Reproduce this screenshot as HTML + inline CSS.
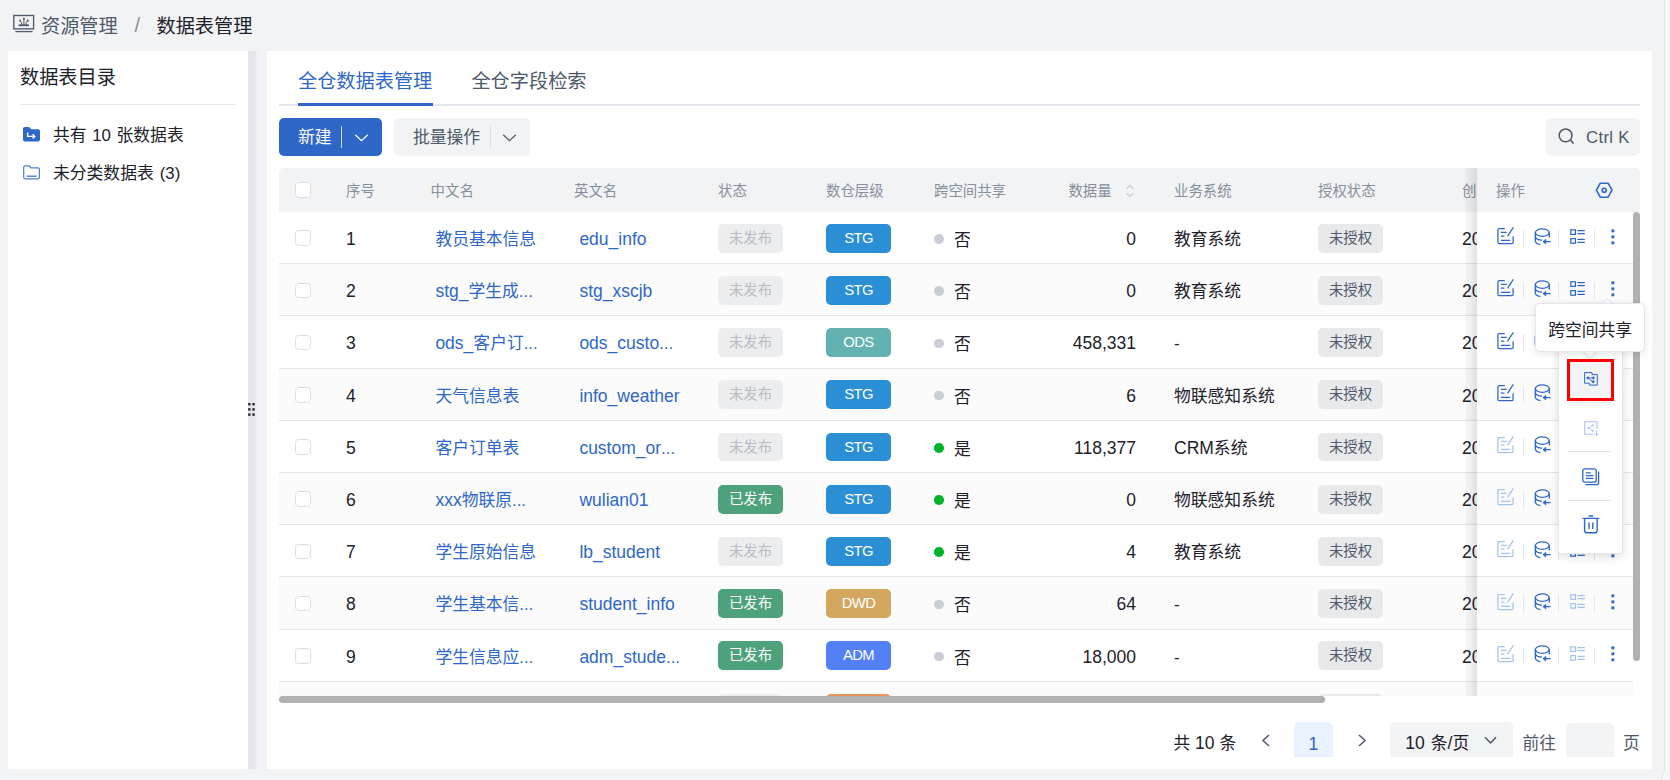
<!DOCTYPE html>
<html lang="zh-CN">
<head>
<meta charset="utf-8">
<title>数据表管理</title>
<style>
*{box-sizing:border-box;margin:0;padding:0}
html,body{width:1670px;height:780px;overflow:hidden}
body{background:#f7f7f7;font-family:"Liberation Sans","Noto Sans CJK SC",sans-serif;color:#1d2129;position:relative;font-size:16.8px}
i{font-style:normal;display:block;position:absolute}
.app{position:absolute;left:0;top:0;width:1665px;height:786px;background:#f2f3f5;border-right:1px solid #e4e4e6;border-bottom-right-radius:18px;overflow:hidden}
.abs{position:absolute}
.t{position:absolute;white-space:nowrap;line-height:1}
.panel{position:absolute;background:#fff}
.ic{position:absolute;display:block;overflow:visible}
/* table */
.tbl{position:absolute;left:279px;top:168px;width:1361px;height:528px;overflow:hidden}
.thead{position:absolute;left:0;top:0;width:1361px;height:44px;background:#f2f3f5;border-radius:5px 5px 0 0}
.th{position:absolute;top:0;height:44px;line-height:46px;font-size:14.4px;color:#86909c;white-space:nowrap}
.tbody{position:absolute;left:0;top:44px;width:1361px;height:484px;overflow:hidden}
.row{position:absolute;left:0;width:100%;height:52.2px;border-bottom:1.2px solid #e5e6eb;background:#fff}
.row.stripe{background:#fbfbfc}
.c{position:absolute;top:0;height:51px;line-height:56px;font-size:16.8px;white-space:nowrap;color:#1d2129}
.c.lk{color:#2e67c8}
.la{font-weight:normal;font-size:17.5px;line-height:1}
.c.num{text-align:right}
.cb{width:15.6px;height:15.6px;border:1.5px solid #dcdee6;border-radius:3.6px;background:#fff}
.tag{position:absolute;top:11.8px;height:28.8px;width:65px;line-height:29.6px;border-radius:5px;font-size:14.4px;text-align:center;white-space:nowrap}
.tag.ly{letter-spacing:-.6px;font-size:14.8px}
.tag.unpub{background:#ecedef;color:#b9bcc3}
.tag.pub{background:#4da17b;color:#fff}
.tag.unauth{background:#e8e9eb;color:#4e5969}
.dot{width:9.6px;height:9.6px;border-radius:50%;top:22.3px}
.vd{width:1.2px;height:17px;background:#e5e6eb}
.fixed{position:absolute;left:1198px;top:0;width:163px;height:528px;background:#fff;}
.shadow{position:absolute;left:1186px;top:0;width:12px;height:528px;background:linear-gradient(90deg,rgba(0,0,0,.02),rgba(0,0,0,.11))}
</style>
</head>
<body>
<div class="app">

<!-- breadcrumb -->
<svg class="ic" style="left:12px;top:13px" width="24" height="21" viewBox="0 0 24 21" fill="none" stroke="#4e5969" stroke-width="1.5"><rect x="1.8" y="2.5" width="19.8" height="13.4" stroke-width="1.35"/><path d="M3.4 18.6H20.6" stroke-width="1.3"/><path d="M6.6 12.3H17" stroke-width="1.8"/><path d="M9.6 12V9.5L8.2 7.9M11.9 12V6.4M14.2 12V9.5L15.6 7.9" stroke-width="1"/><circle cx="8" cy="7.5" r="1" fill="#4e5969" stroke="none"/><circle cx="11.9" cy="5.8" r="1.1" fill="#4e5969" stroke="none"/><circle cx="15.8" cy="7.5" r="1" fill="#4e5969" stroke="none"/></svg>
<span class="t" style="left:41px;top:17px;font-size:19.2px;color:#4e5969">资源管理</span>
<span class="t" style="left:134.6px;top:15.4px;font-size:20px;color:#86909c">/</span>
<span class="t" style="left:156.5px;top:17px;font-size:19.2px;color:#1d2129">数据表管理</span>

<!-- left panel -->
<div class="panel" style="left:8px;top:51px;width:240px;height:718px"></div>
<div class="abs" style="left:248px;top:51px;width:19px;height:718px;background:linear-gradient(90deg,#e5e6eb 0,#e5e6eb 6.6px,#eff0f3 9px,#f2f3f5 13px)"></div>
<svg class="ic" style="left:248px;top:403px" width="8" height="14" viewBox="0 0 8 14" fill="#1d2129"><rect x="0.2" y="0" width="2.3" height="2.4"/><rect x="4.4" y="0" width="2.3" height="2.4"/><rect x="0.2" y="5.2" width="2.3" height="2.4"/><rect x="4.4" y="5.2" width="2.3" height="2.4"/><rect x="0.2" y="10.4" width="2.3" height="2.4"/><rect x="4.4" y="10.4" width="2.3" height="2.4"/></svg>
<span class="t" style="left:20px;top:68px;font-size:19.2px">数据表目录</span>
<div class="abs" style="left:20px;top:103.6px;width:216px;height:1.2px;background:#e5e6eb"></div>
<svg class="ic" style="left:23px;top:127px" width="17" height="15" viewBox="0 0 17 15"><path d="M0 1.8C0 .8.8 0 1.8 0H6.2L8.2 2.2H15.2C16.2 2.2 17 3 17 4V12.6C17 13.6 16.2 14.4 15.2 14.4H1.8C.8 14.4 0 13.6 0 12.6Z" fill="#2e67c8"/><path d="M4.6 5.4V9.4H11.6M9.6 7.2L11.8 9.4L9.6 11.6" fill="none" stroke="#fff" stroke-width="1.4"/></svg>
<span class="t" style="left:53px;top:127.8px;font-size:16.8px;word-spacing:1px">共有 10 张数据表</span>
<svg class="ic" style="left:23px;top:165px" width="17" height="15" viewBox="0 0 17 15" fill="none" stroke="#4a7fd6" stroke-width="1.2"><path d="M.7 2.4C.7 1.5 1.4.8 2.3.8H6.2L8 2.9H14.8C15.7 2.9 16.4 3.6 16.4 4.5V12.2C16.4 13.1 15.7 13.8 14.8 13.8H2.3C1.4 13.8.7 13.1.7 12.2Z"/><path d="M3.6 11.2H13.6" stroke-width="1.4"/></svg>
<span class="t" style="left:53px;top:165.8px;font-size:16.8px;word-spacing:1.4px">未分类数据表 (3)</span>

<!-- main panel -->
<div class="panel" style="left:267px;top:51px;width:1385px;height:718px"></div>
<span class="t" style="left:298px;top:71.5px;font-size:19.2px;color:#2e67c8">全仓数据表管理</span>
<span class="t" style="left:471.4px;top:71.5px;font-size:19.2px;color:#4e5969">全仓字段检索</span>
<div class="abs" style="left:279px;top:104px;width:1361px;height:1.6px;background:#e5e6eb"></div>
<div class="abs" style="left:298px;top:103px;width:135px;height:3px;background:#2e67c8"></div>

<!-- buttons -->
<div class="abs" style="left:279px;top:118px;width:103px;height:38px;border-radius:5px;background:#2e67c8"></div>
<span class="t" style="left:298px;top:129.8px;font-size:16.8px;color:#fff">新建</span>
<div class="abs" style="left:341px;top:126px;width:1.2px;height:22px;background:rgba(255,255,255,.75)"></div>
<svg class="ic" style="left:354px;top:133px" width="15" height="10" viewBox="0 0 15 10" fill="none" stroke="#fff" stroke-width="1.2"><path d="M1.2 1.8L7.5 7.6L13.8 1.8"/></svg>
<div class="abs" style="left:394px;top:118px;width:136px;height:38px;border-radius:5px;background:#f2f3f5"></div>
<span class="t" style="left:413px;top:129.8px;font-size:16.8px;color:#4e5969">批量操作</span>
<div class="abs" style="left:490px;top:126px;width:1.2px;height:22px;background:#dcdde2"></div>
<svg class="ic" style="left:502px;top:133px" width="15" height="10" viewBox="0 0 15 10" fill="none" stroke="#4e5969" stroke-width="1.2"><path d="M1.2 1.8L7.5 7.6L13.8 1.8"/></svg>

<!-- search -->
<div class="abs" style="left:1546px;top:118px;width:94px;height:38px;border-radius:5px;background:#f2f3f5"></div>
<svg class="ic" style="left:1558px;top:128px" width="17" height="17" viewBox="0 0 17 17" fill="none" stroke="#4e5969" stroke-width="1.5"><circle cx="7.6" cy="7.4" r="6.4"/><path d="M12.2 12L15.6 15.4"/></svg>
<span class="t" style="left:1586px;top:129.6px;font-size:16.8px;color:#4e5969;letter-spacing:.3px">Ctrl K</span>

<!-- table -->
<div class="tbl">
 <div class="tbody">
<div class="row" style="top:0.0px"><i class="cb" style="left:16.2px;top:18.4px"></i><span class="c" style="left:67px"><b class="la">1</b></span><span class="c lk" style="left:156.4px">教员基本信息</span><span class="c lk" style="left:300.4px"><b class="la">edu_info</b></span><span class="tag unpub" style="left:439px">未发布</span><span class="tag ly" style="left:547px;background:#2b8fd6;color:#fff">STG</span><i class="dot" style="left:655px;background:#c9cdd4"></i><span class="c" style="left:675px;line-height:58px">否</span><span class="c num" style="left:757px;width:100px"><b class="la">0</b></span><span class="c" style="left:895px">教育系统</span><span class="tag unauth" style="left:1039px">未授权</span><span class="c" style="left:1183px"><b class="la">2024-03-12</b></span></div>
<div class="row stripe" style="top:52.2px"><i class="cb" style="left:16.2px;top:18.4px"></i><span class="c" style="left:67px"><b class="la">2</b></span><span class="c lk" style="left:156.4px"><b class="la">stg_</b>学生成...</span><span class="c lk" style="left:300.4px"><b class="la">stg_xscjb</b></span><span class="tag unpub" style="left:439px">未发布</span><span class="tag ly" style="left:547px;background:#2b8fd6;color:#fff">STG</span><i class="dot" style="left:655px;background:#c9cdd4"></i><span class="c" style="left:675px;line-height:58px">否</span><span class="c num" style="left:757px;width:100px"><b class="la">0</b></span><span class="c" style="left:895px">教育系统</span><span class="tag unauth" style="left:1039px">未授权</span><span class="c" style="left:1183px"><b class="la">2024-03-12</b></span></div>
<div class="row" style="top:104.4px"><i class="cb" style="left:16.2px;top:18.4px"></i><span class="c" style="left:67px"><b class="la">3</b></span><span class="c lk" style="left:156.4px"><b class="la">ods_</b>客户订...</span><span class="c lk" style="left:300.4px"><b class="la">ods_custo</b>...</span><span class="tag unpub" style="left:439px">未发布</span><span class="tag ly" style="left:547px;background:#63b2b2;color:#fff">ODS</span><i class="dot" style="left:655px;background:#c9cdd4"></i><span class="c" style="left:675px;line-height:58px">否</span><span class="c num" style="left:757px;width:100px"><b class="la">458,331</b></span><span class="c" style="left:895px">-</span><span class="tag unauth" style="left:1039px">未授权</span><span class="c" style="left:1183px"><b class="la">2024-03-12</b></span></div>
<div class="row stripe" style="top:156.6px"><i class="cb" style="left:16.2px;top:18.4px"></i><span class="c" style="left:67px"><b class="la">4</b></span><span class="c lk" style="left:156.4px">天气信息表</span><span class="c lk" style="left:300.4px"><b class="la">info_weather</b></span><span class="tag unpub" style="left:439px">未发布</span><span class="tag ly" style="left:547px;background:#2b8fd6;color:#fff">STG</span><i class="dot" style="left:655px;background:#c9cdd4"></i><span class="c" style="left:675px;line-height:58px">否</span><span class="c num" style="left:757px;width:100px"><b class="la">6</b></span><span class="c" style="left:895px">物联感知系统</span><span class="tag unauth" style="left:1039px">未授权</span><span class="c" style="left:1183px"><b class="la">2024-03-12</b></span></div>
<div class="row" style="top:208.8px"><i class="cb" style="left:16.2px;top:18.4px"></i><span class="c" style="left:67px"><b class="la">5</b></span><span class="c lk" style="left:156.4px">客户订单表</span><span class="c lk" style="left:300.4px"><b class="la">custom_or</b>...</span><span class="tag unpub" style="left:439px">未发布</span><span class="tag ly" style="left:547px;background:#2b8fd6;color:#fff">STG</span><i class="dot" style="left:655px;background:#00b42a"></i><span class="c" style="left:675px;line-height:58px">是</span><span class="c num" style="left:757px;width:100px"><b class="la">118,377</b></span><span class="c" style="left:895px"><b class="la">CRM</b>系统</span><span class="tag unauth" style="left:1039px">未授权</span><span class="c" style="left:1183px"><b class="la">2024-03-12</b></span></div>
<div class="row stripe" style="top:261.0px"><i class="cb" style="left:16.2px;top:18.4px"></i><span class="c" style="left:67px"><b class="la">6</b></span><span class="c lk" style="left:156.4px"><b class="la">xxx</b>物联原...</span><span class="c lk" style="left:300.4px"><b class="la">wulian01</b></span><span class="tag pub" style="left:439px">已发布</span><span class="tag ly" style="left:547px;background:#2b8fd6;color:#fff">STG</span><i class="dot" style="left:655px;background:#00b42a"></i><span class="c" style="left:675px;line-height:58px">是</span><span class="c num" style="left:757px;width:100px"><b class="la">0</b></span><span class="c" style="left:895px">物联感知系统</span><span class="tag unauth" style="left:1039px">未授权</span><span class="c" style="left:1183px"><b class="la">2024-03-12</b></span></div>
<div class="row" style="top:313.2px"><i class="cb" style="left:16.2px;top:18.4px"></i><span class="c" style="left:67px"><b class="la">7</b></span><span class="c lk" style="left:156.4px">学生原始信息</span><span class="c lk" style="left:300.4px"><b class="la">lb_student</b></span><span class="tag unpub" style="left:439px">未发布</span><span class="tag ly" style="left:547px;background:#2b8fd6;color:#fff">STG</span><i class="dot" style="left:655px;background:#00b42a"></i><span class="c" style="left:675px;line-height:58px">是</span><span class="c num" style="left:757px;width:100px"><b class="la">4</b></span><span class="c" style="left:895px">教育系统</span><span class="tag unauth" style="left:1039px">未授权</span><span class="c" style="left:1183px"><b class="la">2024-03-12</b></span></div>
<div class="row stripe" style="top:365.4px"><i class="cb" style="left:16.2px;top:18.4px"></i><span class="c" style="left:67px"><b class="la">8</b></span><span class="c lk" style="left:156.4px">学生基本信...</span><span class="c lk" style="left:300.4px"><b class="la">student_info</b></span><span class="tag pub" style="left:439px">已发布</span><span class="tag ly" style="left:547px;background:#d4a761;color:#fff">DWD</span><i class="dot" style="left:655px;background:#c9cdd4"></i><span class="c" style="left:675px;line-height:58px">否</span><span class="c num" style="left:757px;width:100px"><b class="la">64</b></span><span class="c" style="left:895px">-</span><span class="tag unauth" style="left:1039px">未授权</span><span class="c" style="left:1183px"><b class="la">2024-03-12</b></span></div>
<div class="row" style="top:417.6px"><i class="cb" style="left:16.2px;top:18.4px"></i><span class="c" style="left:67px"><b class="la">9</b></span><span class="c lk" style="left:156.4px">学生信息应...</span><span class="c lk" style="left:300.4px"><b class="la">adm_stude</b>...</span><span class="tag pub" style="left:439px">已发布</span><span class="tag ly" style="left:547px;background:#5380f7;color:#fff">ADM</span><i class="dot" style="left:655px;background:#c9cdd4"></i><span class="c" style="left:675px;line-height:58px">否</span><span class="c num" style="left:757px;width:100px"><b class="la">18,000</b></span><span class="c" style="left:895px">-</span><span class="tag unauth" style="left:1039px">未授权</span><span class="c" style="left:1183px"><b class="la">2024-03-12</b></span></div>
<div class="row stripe" style="top:469.8px"><i class="cb" style="left:16.2px;top:18.4px"></i><span class="c" style="left:67px"><b class="la">10</b></span><span class="c lk" style="left:156.4px">学生成绩汇...</span><span class="c lk" style="left:300.4px"><b class="la">dws_score</b></span><span class="tag unpub" style="left:439px">未发布</span><span class="tag ly" style="left:547px;background:#ea945b;color:#fff">DWS</span><i class="dot" style="left:655px;background:#c9cdd4"></i><span class="c" style="left:675px;line-height:58px">否</span><span class="c num" style="left:757px;width:100px"><b class="la">120</b></span><span class="c" style="left:895px">-</span><span class="tag unauth" style="left:1039px">未授权</span><span class="c" style="left:1183px"><b class="la">2024-03-12</b></span></div>
 </div>
 <div class="thead">
  <i class="cb" style="left:16.2px;top:14.4px"></i>
  <span class="th" style="left:67px">序号</span>
  <span class="th" style="left:151.6px">中文名</span>
  <span class="th" style="left:295px">英文名</span>
  <span class="th" style="left:439px">状态</span>
  <span class="th" style="left:547px">数仓层级</span>
  <span class="th" style="left:655px">跨空间共享</span>
  <span class="th" style="left:789.4px">数据量</span>
  <svg class="ic" style="left:845.6px;top:16px" width="10" height="14" viewBox="0 0 10 14" fill="none" stroke="#c9cdd4" stroke-width="1.2"><path d="M1.4 5L4.8 1.4L8.2 5M1.4 9L4.8 12.6L8.2 9"/></svg>
  <span class="th" style="left:895px">业务系统</span>
  <span class="th" style="left:1039px">授权状态</span>
  <span class="th" style="left:1183px">创建时间</span>
 </div>
 <div class="shadow"></div>
 <div class="fixed">
  <div class="abs" style="left:0;top:44px;width:156px;height:484px;overflow:hidden">
<div class="row" style="top:0.0px"><svg class="ic" style="left:20px;top:15.2px" width="18" height="18" viewBox="0 0 18 18" fill="none" stroke="#2e67c8" stroke-width="1.25"><path d="M7.8 1.7H2.1Q.9 1.7 .9 2.9V15.4Q.9 16.6 2.1 16.6H14.9Q16.1 16.6 16.1 15.4V9.3"/><path d="M16.3 .3L10.5 9.3"/><path d="M3.9 5.4H9.7M3.9 9.1H7.4M3.9 13.4H13.2"/></svg><i class="vd" style="left:46px;top:17.6px"></i><svg class="ic" style="left:56.5px;top:15.7px" width="19" height="19" viewBox="0 0 19 19" fill="none" stroke="#2e67c8" stroke-width="1.3"><ellipse cx="8.3" cy="4.6" rx="7" ry="3.7"/><path d="M1.3 4.6V12.6C1.3 14.6 3.4 16.2 6.4 16.6"/><path d="M15.3 4.6V9.4"/><path d="M1.3 8.6C1.8 10.6 4.6 12 8 12.1"/><path d="M10 13.6H16.6"/><path d="M11.8 11.2L8.8 13.6L11.8 16Z" fill="#2e67c8" stroke-width=".6"/></svg><i class="vd" style="left:81px;top:17.6px"></i><svg class="ic" style="left:93.4px;top:16.9px" width="16" height="16" viewBox="0 0 16 16" fill="none" stroke="#2e67c8" stroke-width="1.25"><rect x="0.8" y="0.8" width="4.6" height="4.6"/><rect x="0.8" y="9.6" width="4.6" height="4.6"/><path d="M7.4 1.6H14.8M7.4 4.6H14.8M7.4 10.4H14.8M7.4 13.4H14.8"/></svg><i class="vd" style="left:117px;top:17.6px"></i><svg class="ic" style="left:133.6px;top:16.9px" width="4" height="16" viewBox="0 0 4 16" fill="#2e67c8"><rect x="0.4" y="0.4" width="2.9" height="2.9"/><rect x="0.4" y="6.4" width="2.9" height="2.9"/><rect x="0.4" y="12.4" width="2.9" height="2.9"/></svg></div>
<div class="row stripe" style="top:52.2px"><svg class="ic" style="left:20px;top:15.2px" width="18" height="18" viewBox="0 0 18 18" fill="none" stroke="#2e67c8" stroke-width="1.25"><path d="M7.8 1.7H2.1Q.9 1.7 .9 2.9V15.4Q.9 16.6 2.1 16.6H14.9Q16.1 16.6 16.1 15.4V9.3"/><path d="M16.3 .3L10.5 9.3"/><path d="M3.9 5.4H9.7M3.9 9.1H7.4M3.9 13.4H13.2"/></svg><i class="vd" style="left:46px;top:17.6px"></i><svg class="ic" style="left:56.5px;top:15.7px" width="19" height="19" viewBox="0 0 19 19" fill="none" stroke="#2e67c8" stroke-width="1.3"><ellipse cx="8.3" cy="4.6" rx="7" ry="3.7"/><path d="M1.3 4.6V12.6C1.3 14.6 3.4 16.2 6.4 16.6"/><path d="M15.3 4.6V9.4"/><path d="M1.3 8.6C1.8 10.6 4.6 12 8 12.1"/><path d="M10 13.6H16.6"/><path d="M11.8 11.2L8.8 13.6L11.8 16Z" fill="#2e67c8" stroke-width=".6"/></svg><i class="vd" style="left:81px;top:17.6px"></i><svg class="ic" style="left:93.4px;top:16.9px" width="16" height="16" viewBox="0 0 16 16" fill="none" stroke="#2e67c8" stroke-width="1.25"><rect x="0.8" y="0.8" width="4.6" height="4.6"/><rect x="0.8" y="9.6" width="4.6" height="4.6"/><path d="M7.4 1.6H14.8M7.4 4.6H14.8M7.4 10.4H14.8M7.4 13.4H14.8"/></svg><i class="vd" style="left:117px;top:17.6px"></i><svg class="ic" style="left:133.6px;top:16.9px" width="4" height="16" viewBox="0 0 4 16" fill="#2e67c8"><rect x="0.4" y="0.4" width="2.9" height="2.9"/><rect x="0.4" y="6.4" width="2.9" height="2.9"/><rect x="0.4" y="12.4" width="2.9" height="2.9"/></svg></div>
<div class="row" style="top:104.4px"><svg class="ic" style="left:20px;top:15.2px" width="18" height="18" viewBox="0 0 18 18" fill="none" stroke="#2e67c8" stroke-width="1.25"><path d="M7.8 1.7H2.1Q.9 1.7 .9 2.9V15.4Q.9 16.6 2.1 16.6H14.9Q16.1 16.6 16.1 15.4V9.3"/><path d="M16.3 .3L10.5 9.3"/><path d="M3.9 5.4H9.7M3.9 9.1H7.4M3.9 13.4H13.2"/></svg><i class="vd" style="left:46px;top:17.6px"></i><svg class="ic" style="left:56.5px;top:15.7px" width="19" height="19" viewBox="0 0 19 19" fill="none" stroke="#2e67c8" stroke-width="1.3"><ellipse cx="8.3" cy="4.6" rx="7" ry="3.7"/><path d="M1.3 4.6V12.6C1.3 14.6 3.4 16.2 6.4 16.6"/><path d="M15.3 4.6V9.4"/><path d="M1.3 8.6C1.8 10.6 4.6 12 8 12.1"/><path d="M10 13.6H16.6"/><path d="M11.8 11.2L8.8 13.6L11.8 16Z" fill="#2e67c8" stroke-width=".6"/></svg><i class="vd" style="left:81px;top:17.6px"></i><svg class="ic" style="left:93.4px;top:16.9px" width="16" height="16" viewBox="0 0 16 16" fill="none" stroke="#2e67c8" stroke-width="1.25"><rect x="0.8" y="0.8" width="4.6" height="4.6"/><rect x="0.8" y="9.6" width="4.6" height="4.6"/><path d="M7.4 1.6H14.8M7.4 4.6H14.8M7.4 10.4H14.8M7.4 13.4H14.8"/></svg><i class="vd" style="left:117px;top:17.6px"></i><svg class="ic" style="left:133.6px;top:16.9px" width="4" height="16" viewBox="0 0 4 16" fill="#2e67c8"><rect x="0.4" y="0.4" width="2.9" height="2.9"/><rect x="0.4" y="6.4" width="2.9" height="2.9"/><rect x="0.4" y="12.4" width="2.9" height="2.9"/></svg></div>
<div class="row stripe" style="top:156.6px"><svg class="ic" style="left:20px;top:15.2px" width="18" height="18" viewBox="0 0 18 18" fill="none" stroke="#2e67c8" stroke-width="1.25"><path d="M7.8 1.7H2.1Q.9 1.7 .9 2.9V15.4Q.9 16.6 2.1 16.6H14.9Q16.1 16.6 16.1 15.4V9.3"/><path d="M16.3 .3L10.5 9.3"/><path d="M3.9 5.4H9.7M3.9 9.1H7.4M3.9 13.4H13.2"/></svg><i class="vd" style="left:46px;top:17.6px"></i><svg class="ic" style="left:56.5px;top:15.7px" width="19" height="19" viewBox="0 0 19 19" fill="none" stroke="#2e67c8" stroke-width="1.3"><ellipse cx="8.3" cy="4.6" rx="7" ry="3.7"/><path d="M1.3 4.6V12.6C1.3 14.6 3.4 16.2 6.4 16.6"/><path d="M15.3 4.6V9.4"/><path d="M1.3 8.6C1.8 10.6 4.6 12 8 12.1"/><path d="M10 13.6H16.6"/><path d="M11.8 11.2L8.8 13.6L11.8 16Z" fill="#2e67c8" stroke-width=".6"/></svg><i class="vd" style="left:81px;top:17.6px"></i><svg class="ic" style="left:93.4px;top:16.9px" width="16" height="16" viewBox="0 0 16 16" fill="none" stroke="#2e67c8" stroke-width="1.25"><rect x="0.8" y="0.8" width="4.6" height="4.6"/><rect x="0.8" y="9.6" width="4.6" height="4.6"/><path d="M7.4 1.6H14.8M7.4 4.6H14.8M7.4 10.4H14.8M7.4 13.4H14.8"/></svg><i class="vd" style="left:117px;top:17.6px"></i><svg class="ic" style="left:133.6px;top:16.9px" width="4" height="16" viewBox="0 0 4 16" fill="#2e67c8"><rect x="0.4" y="0.4" width="2.9" height="2.9"/><rect x="0.4" y="6.4" width="2.9" height="2.9"/><rect x="0.4" y="12.4" width="2.9" height="2.9"/></svg></div>
<div class="row" style="top:208.8px"><svg class="ic" style="left:20px;top:15.2px" width="18" height="18" viewBox="0 0 18 18" fill="none" stroke="#a5c3f0" stroke-width="1.25"><path d="M7.8 1.7H2.1Q.9 1.7 .9 2.9V15.4Q.9 16.6 2.1 16.6H14.9Q16.1 16.6 16.1 15.4V9.3"/><path d="M16.3 .3L10.5 9.3"/><path d="M3.9 5.4H9.7M3.9 9.1H7.4M3.9 13.4H13.2"/></svg><i class="vd" style="left:46px;top:17.6px"></i><svg class="ic" style="left:56.5px;top:15.7px" width="19" height="19" viewBox="0 0 19 19" fill="none" stroke="#2e67c8" stroke-width="1.3"><ellipse cx="8.3" cy="4.6" rx="7" ry="3.7"/><path d="M1.3 4.6V12.6C1.3 14.6 3.4 16.2 6.4 16.6"/><path d="M15.3 4.6V9.4"/><path d="M1.3 8.6C1.8 10.6 4.6 12 8 12.1"/><path d="M10 13.6H16.6"/><path d="M11.8 11.2L8.8 13.6L11.8 16Z" fill="#2e67c8" stroke-width=".6"/></svg><i class="vd" style="left:81px;top:17.6px"></i><svg class="ic" style="left:93.4px;top:16.9px" width="16" height="16" viewBox="0 0 16 16" fill="none" stroke="#2e67c8" stroke-width="1.25"><rect x="0.8" y="0.8" width="4.6" height="4.6"/><rect x="0.8" y="9.6" width="4.6" height="4.6"/><path d="M7.4 1.6H14.8M7.4 4.6H14.8M7.4 10.4H14.8M7.4 13.4H14.8"/></svg><i class="vd" style="left:117px;top:17.6px"></i><svg class="ic" style="left:133.6px;top:16.9px" width="4" height="16" viewBox="0 0 4 16" fill="#2e67c8"><rect x="0.4" y="0.4" width="2.9" height="2.9"/><rect x="0.4" y="6.4" width="2.9" height="2.9"/><rect x="0.4" y="12.4" width="2.9" height="2.9"/></svg></div>
<div class="row stripe" style="top:261.0px"><svg class="ic" style="left:20px;top:15.2px" width="18" height="18" viewBox="0 0 18 18" fill="none" stroke="#a5c3f0" stroke-width="1.25"><path d="M7.8 1.7H2.1Q.9 1.7 .9 2.9V15.4Q.9 16.6 2.1 16.6H14.9Q16.1 16.6 16.1 15.4V9.3"/><path d="M16.3 .3L10.5 9.3"/><path d="M3.9 5.4H9.7M3.9 9.1H7.4M3.9 13.4H13.2"/></svg><i class="vd" style="left:46px;top:17.6px"></i><svg class="ic" style="left:56.5px;top:15.7px" width="19" height="19" viewBox="0 0 19 19" fill="none" stroke="#2e67c8" stroke-width="1.3"><ellipse cx="8.3" cy="4.6" rx="7" ry="3.7"/><path d="M1.3 4.6V12.6C1.3 14.6 3.4 16.2 6.4 16.6"/><path d="M15.3 4.6V9.4"/><path d="M1.3 8.6C1.8 10.6 4.6 12 8 12.1"/><path d="M10 13.6H16.6"/><path d="M11.8 11.2L8.8 13.6L11.8 16Z" fill="#2e67c8" stroke-width=".6"/></svg><i class="vd" style="left:81px;top:17.6px"></i><svg class="ic" style="left:93.4px;top:16.9px" width="16" height="16" viewBox="0 0 16 16" fill="none" stroke="#2e67c8" stroke-width="1.25"><rect x="0.8" y="0.8" width="4.6" height="4.6"/><rect x="0.8" y="9.6" width="4.6" height="4.6"/><path d="M7.4 1.6H14.8M7.4 4.6H14.8M7.4 10.4H14.8M7.4 13.4H14.8"/></svg><i class="vd" style="left:117px;top:17.6px"></i><svg class="ic" style="left:133.6px;top:16.9px" width="4" height="16" viewBox="0 0 4 16" fill="#2e67c8"><rect x="0.4" y="0.4" width="2.9" height="2.9"/><rect x="0.4" y="6.4" width="2.9" height="2.9"/><rect x="0.4" y="12.4" width="2.9" height="2.9"/></svg></div>
<div class="row" style="top:313.2px"><svg class="ic" style="left:20px;top:15.2px" width="18" height="18" viewBox="0 0 18 18" fill="none" stroke="#a5c3f0" stroke-width="1.25"><path d="M7.8 1.7H2.1Q.9 1.7 .9 2.9V15.4Q.9 16.6 2.1 16.6H14.9Q16.1 16.6 16.1 15.4V9.3"/><path d="M16.3 .3L10.5 9.3"/><path d="M3.9 5.4H9.7M3.9 9.1H7.4M3.9 13.4H13.2"/></svg><i class="vd" style="left:46px;top:17.6px"></i><svg class="ic" style="left:56.5px;top:15.7px" width="19" height="19" viewBox="0 0 19 19" fill="none" stroke="#2e67c8" stroke-width="1.3"><ellipse cx="8.3" cy="4.6" rx="7" ry="3.7"/><path d="M1.3 4.6V12.6C1.3 14.6 3.4 16.2 6.4 16.6"/><path d="M15.3 4.6V9.4"/><path d="M1.3 8.6C1.8 10.6 4.6 12 8 12.1"/><path d="M10 13.6H16.6"/><path d="M11.8 11.2L8.8 13.6L11.8 16Z" fill="#2e67c8" stroke-width=".6"/></svg><i class="vd" style="left:81px;top:17.6px"></i><svg class="ic" style="left:93.4px;top:16.9px" width="16" height="16" viewBox="0 0 16 16" fill="none" stroke="#2e67c8" stroke-width="1.25"><rect x="0.8" y="0.8" width="4.6" height="4.6"/><rect x="0.8" y="9.6" width="4.6" height="4.6"/><path d="M7.4 1.6H14.8M7.4 4.6H14.8M7.4 10.4H14.8M7.4 13.4H14.8"/></svg><i class="vd" style="left:117px;top:17.6px"></i><svg class="ic" style="left:133.6px;top:16.9px" width="4" height="16" viewBox="0 0 4 16" fill="#2e67c8"><rect x="0.4" y="0.4" width="2.9" height="2.9"/><rect x="0.4" y="6.4" width="2.9" height="2.9"/><rect x="0.4" y="12.4" width="2.9" height="2.9"/></svg></div>
<div class="row stripe" style="top:365.4px"><svg class="ic" style="left:20px;top:15.2px" width="18" height="18" viewBox="0 0 18 18" fill="none" stroke="#a5c3f0" stroke-width="1.25"><path d="M7.8 1.7H2.1Q.9 1.7 .9 2.9V15.4Q.9 16.6 2.1 16.6H14.9Q16.1 16.6 16.1 15.4V9.3"/><path d="M16.3 .3L10.5 9.3"/><path d="M3.9 5.4H9.7M3.9 9.1H7.4M3.9 13.4H13.2"/></svg><i class="vd" style="left:46px;top:17.6px"></i><svg class="ic" style="left:56.5px;top:15.7px" width="19" height="19" viewBox="0 0 19 19" fill="none" stroke="#2e67c8" stroke-width="1.3"><ellipse cx="8.3" cy="4.6" rx="7" ry="3.7"/><path d="M1.3 4.6V12.6C1.3 14.6 3.4 16.2 6.4 16.6"/><path d="M15.3 4.6V9.4"/><path d="M1.3 8.6C1.8 10.6 4.6 12 8 12.1"/><path d="M10 13.6H16.6"/><path d="M11.8 11.2L8.8 13.6L11.8 16Z" fill="#2e67c8" stroke-width=".6"/></svg><i class="vd" style="left:81px;top:17.6px"></i><svg class="ic" style="left:93.4px;top:16.9px" width="16" height="16" viewBox="0 0 16 16" fill="none" stroke="#a5c3f0" stroke-width="1.25"><rect x="0.8" y="0.8" width="4.6" height="4.6"/><rect x="0.8" y="9.6" width="4.6" height="4.6"/><path d="M7.4 1.6H14.8M7.4 4.6H14.8M7.4 10.4H14.8M7.4 13.4H14.8"/></svg><i class="vd" style="left:117px;top:17.6px"></i><svg class="ic" style="left:133.6px;top:16.9px" width="4" height="16" viewBox="0 0 4 16" fill="#2e67c8"><rect x="0.4" y="0.4" width="2.9" height="2.9"/><rect x="0.4" y="6.4" width="2.9" height="2.9"/><rect x="0.4" y="12.4" width="2.9" height="2.9"/></svg></div>
<div class="row" style="top:417.6px"><svg class="ic" style="left:20px;top:15.2px" width="18" height="18" viewBox="0 0 18 18" fill="none" stroke="#a5c3f0" stroke-width="1.25"><path d="M7.8 1.7H2.1Q.9 1.7 .9 2.9V15.4Q.9 16.6 2.1 16.6H14.9Q16.1 16.6 16.1 15.4V9.3"/><path d="M16.3 .3L10.5 9.3"/><path d="M3.9 5.4H9.7M3.9 9.1H7.4M3.9 13.4H13.2"/></svg><i class="vd" style="left:46px;top:17.6px"></i><svg class="ic" style="left:56.5px;top:15.7px" width="19" height="19" viewBox="0 0 19 19" fill="none" stroke="#2e67c8" stroke-width="1.3"><ellipse cx="8.3" cy="4.6" rx="7" ry="3.7"/><path d="M1.3 4.6V12.6C1.3 14.6 3.4 16.2 6.4 16.6"/><path d="M15.3 4.6V9.4"/><path d="M1.3 8.6C1.8 10.6 4.6 12 8 12.1"/><path d="M10 13.6H16.6"/><path d="M11.8 11.2L8.8 13.6L11.8 16Z" fill="#2e67c8" stroke-width=".6"/></svg><i class="vd" style="left:81px;top:17.6px"></i><svg class="ic" style="left:93.4px;top:16.9px" width="16" height="16" viewBox="0 0 16 16" fill="none" stroke="#a5c3f0" stroke-width="1.25"><rect x="0.8" y="0.8" width="4.6" height="4.6"/><rect x="0.8" y="9.6" width="4.6" height="4.6"/><path d="M7.4 1.6H14.8M7.4 4.6H14.8M7.4 10.4H14.8M7.4 13.4H14.8"/></svg><i class="vd" style="left:117px;top:17.6px"></i><svg class="ic" style="left:133.6px;top:16.9px" width="4" height="16" viewBox="0 0 4 16" fill="#2e67c8"><rect x="0.4" y="0.4" width="2.9" height="2.9"/><rect x="0.4" y="6.4" width="2.9" height="2.9"/><rect x="0.4" y="12.4" width="2.9" height="2.9"/></svg></div>
<div class="row stripe" style="top:469.8px"><svg class="ic" style="left:20px;top:15.2px" width="18" height="18" viewBox="0 0 18 18" fill="none" stroke="#a5c3f0" stroke-width="1.25"><path d="M7.8 1.7H2.1Q.9 1.7 .9 2.9V15.4Q.9 16.6 2.1 16.6H14.9Q16.1 16.6 16.1 15.4V9.3"/><path d="M16.3 .3L10.5 9.3"/><path d="M3.9 5.4H9.7M3.9 9.1H7.4M3.9 13.4H13.2"/></svg><i class="vd" style="left:46px;top:17.6px"></i><svg class="ic" style="left:56.5px;top:15.7px" width="19" height="19" viewBox="0 0 19 19" fill="none" stroke="#2e67c8" stroke-width="1.3"><ellipse cx="8.3" cy="4.6" rx="7" ry="3.7"/><path d="M1.3 4.6V12.6C1.3 14.6 3.4 16.2 6.4 16.6"/><path d="M15.3 4.6V9.4"/><path d="M1.3 8.6C1.8 10.6 4.6 12 8 12.1"/><path d="M10 13.6H16.6"/><path d="M11.8 11.2L8.8 13.6L11.8 16Z" fill="#2e67c8" stroke-width=".6"/></svg><i class="vd" style="left:81px;top:17.6px"></i><svg class="ic" style="left:93.4px;top:16.9px" width="16" height="16" viewBox="0 0 16 16" fill="none" stroke="#a5c3f0" stroke-width="1.25"><rect x="0.8" y="0.8" width="4.6" height="4.6"/><rect x="0.8" y="9.6" width="4.6" height="4.6"/><path d="M7.4 1.6H14.8M7.4 4.6H14.8M7.4 10.4H14.8M7.4 13.4H14.8"/></svg><i class="vd" style="left:117px;top:17.6px"></i><svg class="ic" style="left:133.6px;top:16.9px" width="4" height="16" viewBox="0 0 4 16" fill="#2e67c8"><rect x="0.4" y="0.4" width="2.9" height="2.9"/><rect x="0.4" y="6.4" width="2.9" height="2.9"/><rect x="0.4" y="12.4" width="2.9" height="2.9"/></svg></div>
  </div>
  <div class="abs" style="left:0;top:0;width:163px;height:44px;background:#f2f3f5;border-radius:0 5px 0 0">
   <span class="th" style="left:19px">操作</span>
   <svg class="ic" style="left:118.4px;top:13.8px" width="19" height="17" viewBox="0 0 19 17" fill="none" stroke="#2e67c8" stroke-width="1.6"><path d="M1.4 8.2L5.3 1.2H13.1L17 8.2L13.1 15.2H5.3Z" stroke-linejoin="round"/><circle cx="9.2" cy="8.2" r="2"/></svg>
  </div>
  <div class="abs" style="left:156px;top:44px;width:7px;height:449px;border-radius:4px;background:#b1b1b1"></div>
 </div>
</div>
<!-- h scrollbar -->
<div class="abs" style="left:279px;top:696px;width:1046px;height:7px;border-radius:4px;background:#b1b1b1"></div>

<!-- pagination -->
<div class="abs" style="left:1150px;top:715px;width:500px;height:42px;overflow:hidden">
 <span class="t" style="left:23.4px;top:20.4px;font-size:16.8px;word-spacing:.2px">共 <b class="la">10</b> 条</span>
 <svg class="ic" style="left:111px;top:19.4px" width="10" height="13" viewBox="0 0 10 13" fill="none" stroke="#4e5969" stroke-width="1.5"><path d="M8 1L2 6.5L8 12"/></svg>
 <div class="abs" style="left:144px;top:7px;width:39px;height:40px;border-radius:5px;background:#e8f3ff"></div>
 <span class="t" style="left:158.6px;top:20.8px;font-size:17.5px;color:#2e67c8">1</span>
 <svg class="ic" style="left:207px;top:19.4px" width="10" height="13" viewBox="0 0 10 13" fill="none" stroke="#4e5969" stroke-width="1.5"><path d="M2 1L8 6.5L2 12"/></svg>
 <div class="abs" style="left:240px;top:7px;width:123px;height:40px;border-radius:5px;background:#f2f3f5"></div>
 <span class="t" style="left:255.2px;top:20.2px;font-size:16.8px;word-spacing:1.4px"><b class="la">10</b> 条<b class="la">/</b>页</span>
 <svg class="ic" style="left:334.4px;top:21px" width="13" height="9" viewBox="0 0 13 9" fill="none" stroke="#4e5969" stroke-width="1.5"><path d="M1 1.2L6.5 7L12 1.2"/></svg>
 <span class="t" style="left:372.4px;top:21px;font-size:16.8px;color:#4e5969">前往</span>
 <div class="abs" style="left:416px;top:8px;width:48px;height:40px;border-radius:5px;background:#f2f3f5"></div>
 <span class="t" style="left:473px;top:21px;font-size:16.8px;color:#4e5969">页</span>
</div>

<!-- dropdown menu -->
<div class="abs" style="left:1558.2px;top:304px;width:64.8px;height:250.4px;background:#fff;border:1px solid #e5e6eb;border-radius:2px;box-shadow:0 3px 10px rgba(0,0,0,.12)"></div>
<div class="abs" style="left:1603px;top:299.6px;width:9px;height:9px;background:#fff;border-left:1px solid #e5e6eb;border-top:1px solid #e5e6eb;transform:rotate(45deg)"></div>
<div class="abs" style="left:1567px;top:358.6px;width:47px;height:42.4px;border:3px solid #ff0000;background:#f2f3f5"></div>
<div class="abs" style="left:1568px;top:402px;width:44px;height:1.2px;background:#e5e6eb"></div>
<div class="abs" style="left:1568px;top:451px;width:44px;height:1.2px;background:#e5e6eb"></div>
<div class="abs" style="left:1568px;top:500px;width:44px;height:1.2px;background:#e5e6eb"></div>
<!-- menu icon 1 : cross-space share -->
<svg class="ic" style="left:1583.5px;top:371.7px" width="14" height="14" viewBox="0 0 14 14" fill="none" stroke="#2e67c8" stroke-width="1"><path d="M.6.6H8V2.6H13.3V13.1H5.4V11.2H.6Z"/><path d="M3.8 5.9H9.4M3.8 5.9L9.1 9.8" stroke-width=".9"/><rect x="2.6" y="4.7" width="2.4" height="2.4" transform="rotate(45 3.8 5.9)" fill="#2e67c8" stroke="none"/><rect x="8.2" y="4.7" width="2.4" height="2.4" transform="rotate(45 9.4 5.9)" fill="#2e67c8" stroke="none"/><rect x="7.9" y="8.6" width="2.4" height="2.4" transform="rotate(45 9.1 9.8)" fill="#2e67c8" stroke="none"/></svg>
<!-- menu icon 2 : disabled -->
<svg class="ic" style="left:1583.6px;top:420.6px" width="16" height="16" viewBox="0 0 16 16" fill="none" stroke="#a5c3f0" stroke-width="1.1"><path d="M13 8V.8H.8V13.2H9.4"/><path d="M8.6 4.4L4.6 7L8.6 9.8" stroke-width=".9"/><circle cx="8.7" cy="4.3" r="1.1" fill="#a5c3f0" stroke="none"/><circle cx="4.5" cy="7" r="1.1" fill="#a5c3f0" stroke="none"/><circle cx="8.7" cy="9.8" r="1.1" fill="#a5c3f0" stroke="none"/><path d="M12.6 9.6V14.4M10.6 12.6L12.6 14.6L14.6 12.6" stroke-width="1"/></svg>
<!-- menu icon 3 : copy -->
<svg class="ic" style="left:1582px;top:468px" width="18" height="18" viewBox="0 0 18 18" fill="none" stroke="#2e67c8" stroke-width="1.3"><rect x=".8" y=".8" width="13.4" height="13.4" rx="2"/><path d="M16.6 3.4V14.4C16.6 15.6 15.6 16.6 14.4 16.6H3.4"/><path d="M3.8 4.8H8.8M3.8 7.6H11.4M3.8 10.4H11.4"/></svg>
<!-- menu icon 4 : trash -->
<svg class="ic" style="left:1582px;top:515.4px" width="18" height="19" viewBox="0 0 18 19" fill="none" stroke="#2e67c8" stroke-width="1.4"><path d="M.6 3.4H17.2M6.6 1H11.2"/><path d="M2.6 3.6V15.4C2.6 16.8 3.6 17.8 5 17.8H12.8C14.2 17.8 15.2 16.8 15.2 15.4V3.6"/><path d="M7 7.4V14M10.8 7.4V14"/></svg>

<!-- tooltip -->
<div class="abs" style="left:1584.6px;top:346.6px;width:10px;height:10px;background:#fff;border-right:1px solid #e5e6eb;border-bottom:1px solid #e5e6eb;transform:rotate(45deg);box-shadow:2px 2px 4px rgba(0,0,0,.06)"></div>
<div class="abs" style="left:1535.2px;top:303.2px;width:109.8px;height:49px;background:#fff;border:1px solid #e5e6eb;border-radius:5px;box-shadow:0 2px 8px rgba(0,0,0,.1)"></div>
<div class="abs" style="left:1583.6px;top:345.6px;width:12px;height:5.6px;background:#fff"></div>
<span class="t" style="left:1548.2px;top:322.6px;font-size:16.8px">跨空间共享</span>

</div>
</body>
</html>
